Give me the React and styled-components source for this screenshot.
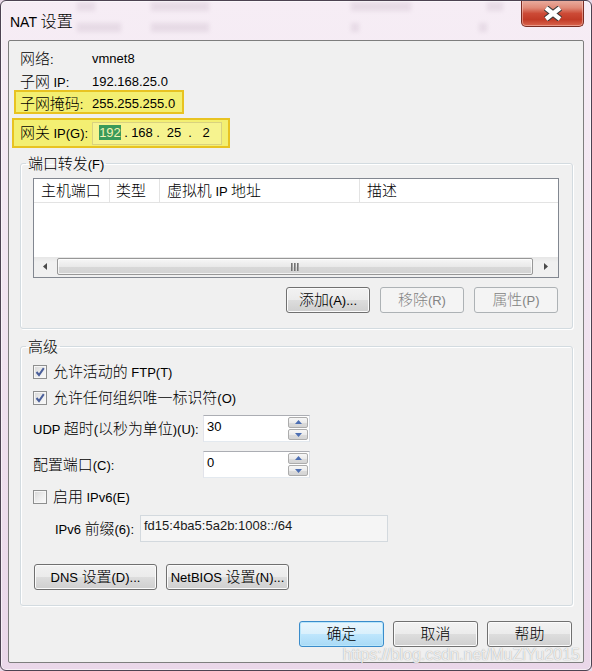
import React from "react";
import styled, { createGlobalStyle, css } from "styled-components";

const GlobalStyle = createGlobalStyle`
  html, body {
    margin: 0;
    padding: 0;
  }
  body {
    width: 592px;
    height: 671px;
    overflow: hidden;
    font-family: "Liberation Sans", "Noto Sans CJK SC", sans-serif;
    font-size: 13px;
    line-height: 16px;
    color: #000;
    background: #e9d9e8;
  }
`;

// CJK runs are rendered a bit larger than the latin text, as in the original dialog
const HAN = /([\u2e80-\u9fff\uff00-\uffef]+)/;

const Txt = ({ children }) => (
  <span>
    {String(children)
      .split(HAN)
      .map((part, i) => (i % 2 ? <Han key={i}>{part}</Han> : part))}
  </span>
);

const Han = styled.span`
  font-family: "Noto Sans CJK SC", sans-serif;
  font-size: 1.15em;
  font-weight: 300;
`;

const CloseIcon = () => (
  <svg width="20" height="15" viewBox="0 0 20 15">
    <path d="M3 2 L17 13 M17 2 L3 13" stroke="#3b3b3b" strokeWidth="6.5" />
    <path d="M3 2 L17 13 M17 2 L3 13" stroke="#fff" strokeWidth="4.2" />
  </svg>
);

const CheckMark = () => (
  <svg width="10" height="10" viewBox="0 0 10 10">
    <path d="M1.5 5 L4 8 L8.8 1.2" fill="none" stroke="#4a5f9a" strokeWidth="2" />
  </svg>
);

const Arrow = ({ dir }) => (
  <svg width="7" height="7" viewBox="0 0 7 7">
    {dir === "left" && <path d="M5 0 L1 3.5 L5 7 Z" fill="#4a4a4a" />}
    {dir === "right" && <path d="M2 0 L6 3.5 L2 7 Z" fill="#4a4a4a" />}
    {dir === "up" && <path d="M0 5 L3.5 1 L7 5 Z" fill="#4d6fb3" />}
    {dir === "down" && <path d="M0 2 L3.5 6 L7 2 Z" fill="#4d6fb3" />}
  </svg>
);

const Spin = ({ value }) => (
  <SpinBox>
    <SpinValue>{value}</SpinValue>
    <Spinner>
      <SpinButton><Arrow dir="up" /></SpinButton>
      <SpinButton><Arrow dir="down" /></SpinButton>
    </Spinner>
  </SpinBox>
);

const CheckBox = ({ checked, label, $mt }) => (
  <CheckRow $mt={$mt}>
    <Check>{checked && <CheckMark />}</Check>
    <Txt>{label}</Txt>
  </CheckRow>
);

const columns = [
  { title: "主机端口", w: 76, pad: 7 },
  { title: "类型", w: 50, pad: 6 },
  { title: "虚拟机 IP 地址", w: 200, pad: 7 },
  { title: "描述", pad: 7 },
];

const App = () => (
  <>
    <GlobalStyle />
    <Frame>
      <Backdrop>
        <SmudgeRow>
          <Smudge $ml={6} $w={18} />
          <Smudge $ml={56} $w={58} />
          <Smudge $ml={142} $w={60} />
          <Smudge $ml={76} $w={16} />
        </SmudgeRow>
        <SmudgeRow>
          <Smudge $ml={6} $w={44} />
          <Smudge $ml={30} $w={58} />
          <Smudge $ml={142} $w={8} />
          <Smudge $ml={120} $w={8} />
        </SmudgeRow>
      </Backdrop>

      <TitleBar>
        <Title><Txt>NAT 设置</Txt></Title>
        <CloseButton aria-label="关闭"><CloseIcon /></CloseButton>
      </TitleBar>

      <Client>
        <InfoRow $mt={6} $h={23}>
          <InfoLabel><Txt>网络:</Txt></InfoLabel>
          vmnet8
        </InfoRow>
        <InfoRow $h={23}>
          <InfoLabel><Txt>子网 IP:</Txt></InfoLabel>
          192.168.25.0
        </InfoRow>
        <MarkRow $mt={-3} $ml={5} $w={170} $h={24} $pl={4} $pt={3}>
          <InfoLabel><Txt>子网掩码:</Txt></InfoLabel>
          255.255.255.0
        </MarkRow>
        <MarkRow $mt={4} $ml={3} $w={218} $h={30} $pl={6}>
          <InfoLabel><Txt>网关 IP(G):</Txt></InfoLabel>
          <IpField>
            <IpPart><Selected>192</Selected></IpPart>
            <IpDot>.</IpDot>
            <IpPart>168</IpPart>
            <IpDot>.</IpDot>
            <IpPart>25</IpPart>
            <IpDot>.</IpDot>
            <IpPart>2</IpPart>
          </IpField>
        </MarkRow>

        <Group $mt={6}>
          <Legend><Txt>端口转发(F)</Txt></Legend>
          <GroupBody $pt={6} $pb={15}>
            <ListView>
              <ListHeader>
                {columns.map((c) => (
                  <HeaderCell key={c.title} $w={c.w} $pad={c.pad}>
                    <Txt>{c.title}</Txt>
                  </HeaderCell>
                ))}
              </ListHeader>
              <ListBody />
              <HScroll>
                <ScrollArrow $w={23}><Arrow dir="left" /></ScrollArrow>
                <Thumb><Grip /><Grip /><Grip /></Thumb>
                <ScrollArrow $w={25}><Arrow dir="right" /></ScrollArrow>
              </HScroll>
            </ListView>
            <ButtonRow $mt={9} $gap={10} $pr={1}>
              <Button $w={84}><Txt>添加(A)...</Txt></Button>
              <Button $w={84} disabled><Txt>移除(R)</Txt></Button>
              <Button $w={84} disabled><Txt>属性(P)</Txt></Button>
            </ButtonRow>
          </GroupBody>
        </Group>

        <Group $mt={8}>
          <Legend><Txt>高级</Txt></Legend>
          <GroupBody $pt={4} $pb={15}>
            <CheckBox checked label="允许活动的 FTP(T)" />
            <CheckBox checked label="允许任何组织唯一标识符(O)" />
            <FieldRow $mt={4}>
              <FieldLabel $w={170}><Txt>UDP 超时(以秒为单位)(U):</Txt></FieldLabel>
              <Spin value="30" />
            </FieldRow>
            <FieldRow $mt={9}>
              <FieldLabel $w={170}><Txt>配置端口(C):</Txt></FieldLabel>
              <Spin value="0" />
            </FieldRow>
            <CheckBox label="启用 IPv6(E)" $mt={6} />
            <FieldRow $mt={5} $pl={22}>
              <FieldLabel $w={85}><Txt>IPv6 前缀(6):</Txt></FieldLabel>
              <ReadOnlyBox>fd15:4ba5:5a2b:1008::/64</ReadOnlyBox>
            </FieldRow>
            <ButtonRow $mt={22} $gap={9} $start>
              <Button $w={123}><Txt>DNS 设置(D)...</Txt></Button>
              <Button $w={123}><Txt>NetBIOS 设置(N)...</Txt></Button>
            </ButtonRow>
          </GroupBody>
        </Group>

        <ButtonRow $mt={15} $gap={9} $pr={11}>
          <Button $w={85} $default><Txt>确定</Txt></Button>
          <Button $w={85}><Txt>取消</Txt></Button>
          <Button $w={85}><Txt>帮助</Txt></Button>
        </ButtonRow>
      </Client>

      <Watermark>https://blog.csdn.net/MuZiYu2015</Watermark>
    </Frame>
  </>
);

const Frame = styled.div`
  position: relative;
  width: 592px;
  height: 671px;
  box-sizing: border-box;
  display: flex;
  flex-direction: column;
  padding: 0 7px 7px;
  border: 1px solid #4d4352;
  border-radius: 6px;
  overflow: hidden;
  background: linear-gradient(180deg, #f6edf5 0%, #f1e4f0 45%, #ead7e9 100%);
  box-shadow: inset 0 0 0 1px rgba(255, 255, 255, 0.6);
`;

const Backdrop = styled.div`
  position: absolute;
  left: 70px;
  top: 0;
  width: 450px;
  display: flex;
  flex-direction: column;
  gap: 12px;
  padding-top: 1px;
  filter: blur(2px);
  pointer-events: none;
`;

const SmudgeRow = styled.div`
  display: flex;
  height: 9px;
`;

const Smudge = styled.span`
  margin-left: ${(p) => p.$ml}px;
  width: ${(p) => p.$w}px;
  background: rgba(140, 110, 140, 0.14);
`;

const TitleBar = styled.div`
  position: relative;
  height: 39px;
  display: flex;
  align-items: flex-start;
  flex: none;
`;

const Title = styled.div`
  margin: 10px 0 0 2px;
  font-size: 14px;
  line-height: 18px;
  color: #000;
`;

const CloseButton = styled.div`
  margin: -1px 0 0 auto;
  width: 63px;
  height: 27px;
  box-sizing: border-box;
  border: 1px solid #7a2c22;
  border-top: none;
  border-radius: 0 0 5px 5px;
  background: linear-gradient(180deg, #eab0a2 0%, #e08a77 30%, #cc4a36 52%, #c23b27 75%, #d9654e 100%);
  box-shadow: inset 0 0 0 1px rgba(255, 220, 210, 0.45);
  display: flex;
  align-items: center;
  justify-content: center;
`;

const Client = styled.div`
  flex: 1;
  display: flex;
  flex-direction: column;
  border: 1px solid #7e7e7e;
  border-radius: 2px;
  background: #f0f0f0;
`;

const InfoRow = styled.div`
  display: flex;
  align-items: center;
  flex: none;
  height: ${(p) => p.$h}px;
  margin-top: ${(p) => p.$mt || 0}px;
  padding-left: 11px;
`;

const MarkRow = styled(InfoRow)`
  box-sizing: border-box;
  margin-left: ${(p) => p.$ml}px;
  width: ${(p) => p.$w}px;
  padding-left: ${(p) => p.$pl}px;
  padding-top: ${(p) => p.$pt || 0}px;
  border: 2px solid #e8c321;
  background: #f3ef72;
`;

const InfoLabel = styled.span`
  width: 72px;
  flex: none;
`;

const IpField = styled.div`
  width: 130px;
  height: 23px;
  box-sizing: border-box;
  display: flex;
  align-items: center;
  padding-left: 5px;
  border: 1px solid #d9d27f;
  background: #f6f38f;
`;

const IpPart = styled.span`
  width: 24px;
  text-align: center;
`;

const IpDot = styled.span`
  width: 8px;
  text-align: center;
`;

const Selected = styled.span`
  display: inline-block;
  line-height: 15px;
  background: #3a9a5a;
  color: #f4f2b4;
`;

const Group = styled.fieldset`
  margin: ${(p) => p.$mt}px 10px 0 11px;
  padding: 0;
  min-width: 0;
  border: 1px solid #d3dbe0;
  border-radius: 3px;
  box-shadow: inset 1px 1px 0 #fff, 1px 1px 0 #fff;
`;

const Legend = styled.legend`
  margin-left: 5px;
  padding: 0 2px;
  line-height: 18px;
  height: 18px;
`;

const GroupBody = styled.div`
  display: flex;
  flex-direction: column;
  padding: ${(p) => p.$pt}px 13px ${(p) => p.$pb}px 12px;
`;

const ListView = styled.div`
  height: 100px;
  box-sizing: border-box;
  display: flex;
  flex-direction: column;
  border: 1px solid #828790;
  background: #fff;
`;

const ListHeader = styled.div`
  display: flex;
  height: 24px;
  box-sizing: border-box;
  border-bottom: 1px solid #e3e3e3;
`;

const HeaderCell = styled.div`
  display: flex;
  align-items: center;
  box-sizing: border-box;
  padding-left: ${(p) => p.$pad}px;
  ${(p) =>
    p.$w
      ? css`
          width: ${p.$w}px;
          flex: none;
          border-right: 1px solid #e3e3e3;
        `
      : css`
          flex: 1;
        `}
`;

const ListBody = styled.div`
  flex: 1;
`;

const HScroll = styled.div`
  height: 20px;
  flex: none;
  display: flex;
  box-sizing: border-box;
  padding: 1px 0 2px;
  background: linear-gradient(180deg, #e6e6e6 0%, #f0f0f0 25%, #f0f0f0 100%);
`;

const ScrollArrow = styled.div`
  width: ${(p) => p.$w}px;
  flex: none;
  display: flex;
  align-items: center;
  justify-content: center;
`;

const Thumb = styled.div`
  flex: 1;
  display: flex;
  align-items: center;
  justify-content: center;
  gap: 1px;
  box-sizing: border-box;
  border: 1px solid #979797;
  border-radius: 2px;
  background: linear-gradient(180deg, #f6f6f6 0%, #e9e9e9 50%, #d8d8d8 51%, #d2d2d2 100%);
  box-shadow: inset 0 0 0 1px rgba(255, 255, 255, 0.7);
`;

const Grip = styled.span`
  width: 2px;
  height: 8px;
  background: linear-gradient(90deg, #5a5a5a, #b8b8b8);
`;

const ButtonRow = styled.div`
  display: flex;
  justify-content: ${(p) => (p.$start ? "flex-start" : "flex-end")};
  gap: ${(p) => p.$gap}px;
  margin-top: ${(p) => p.$mt}px;
  padding-right: ${(p) => p.$pr || 0}px;
  padding-left: ${(p) => (p.$start ? 1 : 0)}px;
`;

const Button = styled.button`
  width: ${(p) => p.$w}px;
  height: 26px;
  box-sizing: border-box;
  padding: 0;
  display: flex;
  align-items: center;
  justify-content: center;
  font: inherit;
  line-height: 16px;
  color: #000;
  border: 1px solid #707070;
  border-radius: 3px;
  background: linear-gradient(180deg, #f2f2f2 0%, #ebebeb 50%, #dddddd 51%, #cfcfcf 100%);
  box-shadow: inset 0 0 0 1px #fbfbfb;

  ${(p) =>
    p.disabled &&
    css`
      color: #838383;
      border-color: #adb2b5;
      background: #f4f4f4;
      box-shadow: none;
    `}

  ${(p) =>
    p.$default &&
    css`
      border-color: #3a8ccb;
      background: linear-gradient(180deg, #e9f6fd 0%, #d9f0fc 50%, #bee6fd 51%, #a9daf6 100%);
      box-shadow: inset 0 0 0 1px #b9e6fb;
    `}
`;

const CheckRow = styled.div`
  display: flex;
  align-items: center;
  gap: 6px;
  height: 26px;
  margin-top: ${(p) => p.$mt || 0}px;
`;

const Check = styled.span`
  width: 14px;
  height: 14px;
  flex: none;
  box-sizing: border-box;
  display: flex;
  align-items: center;
  justify-content: center;
  border: 1px solid #8e8f8f;
  background: linear-gradient(135deg, #d6d6d6 0%, #ececec 50%, #fbfbfb 100%);
  box-shadow: inset 0 0 0 1px #f6f6f6;
`;

const FieldRow = styled.div`
  display: flex;
  align-items: center;
  height: 27px;
  margin-top: ${(p) => p.$mt}px;
  padding-left: ${(p) => p.$pl || 0}px;
`;

const FieldLabel = styled.span`
  width: ${(p) => p.$w}px;
  flex: none;
`;

const SpinBox = styled.div`
  width: 107px;
  height: 27px;
  box-sizing: border-box;
  display: flex;
  border: 1px solid;
  border-color: #abadb3 #dbdfe6 #e3e9ef #e2e3ea;
  background: #fff;
`;

const SpinValue = styled.div`
  flex: 1;
  padding: 3px 0 0 3px;
`;

const Spinner = styled.div`
  width: 20px;
  display: flex;
  flex-direction: column;
  gap: 1px;
  padding: 1px 1px 1px 0;
`;

const SpinButton = styled.div`
  flex: 1;
  display: flex;
  align-items: center;
  justify-content: center;
  border: 1px solid #acacac;
  border-radius: 2px;
  background: linear-gradient(180deg, #f7f7f7 0%, #ebebeb 50%, #dcdcdc 51%, #d4d4d4 100%);
`;

const ReadOnlyBox = styled.div`
  width: 248px;
  height: 27px;
  box-sizing: border-box;
  padding: 2px 0 0 3px;
  border: 1px solid #d3d9de;
  background: #f5f5f5;
  color: #1a1a1a;
`;

const Watermark = styled.div`
  position: absolute;
  right: 11px;
  bottom: 6px;
  font-size: 16px;
  line-height: 18px;
  color: rgba(255, 255, 255, 0.82);
  text-shadow: 0 0 1px rgba(70, 70, 70, 0.55);
  pointer-events: none;
`;

export default App;
